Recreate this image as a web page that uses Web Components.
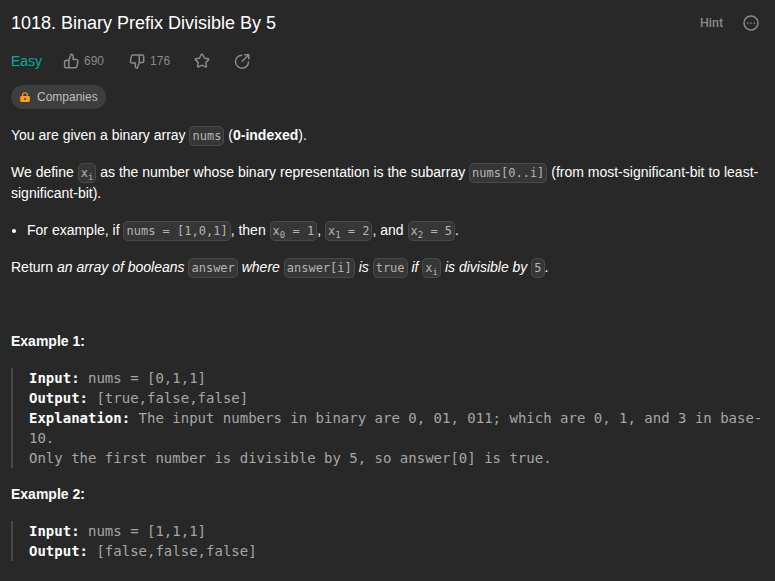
<!DOCTYPE html>
<html lang="en">
<head>
<meta charset="utf-8">
<title>1018. Binary Prefix Divisible By 5</title>
<style>
html,body{margin:0;background:#282828;height:581px;overflow:hidden}
body{font-family:"Liberation Sans",Arial,sans-serif;color:#fff}
</style>
</head>
<body>
<problem-page></problem-page>
<script>
const define = (name, html) => customElements.define(name, class extends HTMLElement {
  constructor() {
    super();
    const t = document.createElement('template');
    t.innerHTML = html;
    this.attachShadow({mode: 'open'}).append(t.content.cloneNode(true));
  }
});

const icons = {
  up: '<path d="M5.9 7.4h-3.3a1 1 0 0 0-1 1v5.3a1 1 0 0 0 1 1h3.3M5.9 6.9v7.8h6.5a1.5 1.5 0 0 0 1.5-1.2l1-5.2a1.5 1.5 0 0 0-1.5-1.8h-3.3V3a1.7 1.7 0 0 0-2.1-1.7L5.9 6.9z"/>',
  down: '<path d="M10.3 1.9h3.2a1.2 1.2 0 0 1 1.2 1.2v5.2a1.2 1.2 0 0 1-1.2 1.2h-3.2M10.3 1.900v7.700l-2 5.500a1.700 1.700 0 0 1-2-1.700V10.100H2.900a1.500 1.500 0 0 1-1.500-1.800l1-5.100a1.500 1.500 0 0 1 1.500-1.300z"/>',
  star: '<path d="M8 1.2q.6 0 .9.6l1.400 3q.2.4.6.5l3.200.5q1 .3.3 1.100L12 9.300q-.2.3-.2.6l.6 3.300q0 1-.9.7l-3-1.500q-.5-.2-1 0l-3 1.500q-.9.3-.9-.7l.6-3.300q0-.4-.2-.6L1.600 6.900Q.9 6.100 1.900 5.800l3.200-.5q.4-.1.6-.5l1.400-3q.3-.6.9-.6z"/>',
  share: '<path d="M7.800 2.200A6.500 6.500 0 1 0 14.500 8.900M8.300 8.200l5.700-5.700M10.800 1.700h4v4"/>',
  more: '<circle cx="8" cy="8" r="7"/><path d="M4.700 8h.01M8 8h.01M11.300 8h.01" stroke-width="1.700"/>'
};
customElements.define('line-icon', class extends HTMLElement {
  connectedCallback() {
    this.attachShadow({mode: 'open'}).innerHTML = `<style>:host{display:block;width:16px;height:16px;color:#8a8a8a}svg{display:block;overflow:visible}</style>
    <svg width="16" height="16" viewBox="0 0 16 16" fill="none" stroke="currentColor" stroke-width="1.500" stroke-linecap="round" stroke-linejoin="round">${icons[this.getAttribute('name')]}</svg>`;
  }
});

define('title-bar', `<style>
:host{display:flex;height:26px;align-items:center;justify-content:space-between;font-size:18px;line-height:26px}
.tools{display:flex;align-items:center;gap:20px}
.hint{font:500 12.500px/20px Roboto,sans-serif;color:#8a8a8a;width:23px;white-space:nowrap}
</style><div><slot></slot></div><div class="tools"><span class="hint">Hint</span><line-icon name="more"></line-icon></div>`);

define('stat-item', `<style>
:host{display:flex;align-items:center;gap:5px;font-size:12px;line-height:16px;color:#8a8a8a}
</style><slot name="icon"></slot><span><slot></slot></span>`);

define('stats-row', `<style>
:host{display:flex;align-items:center;height:24px;margin-top:13px}
.level{color:#00af9b;font-size:14px;width:52px}
.down{margin-left:25px}.star{margin-left:24px}.share{margin-left:24px}
</style><span class="level">Easy</span>
<stat-item class="up"><line-icon slot="icon" name="up"></line-icon>690</stat-item>
<stat-item class="down"><line-icon slot="icon" name="down"></line-icon>176</stat-item>
<line-icon class="star" name="star"></line-icon><line-icon class="share" name="share"></line-icon>`);

define('company-tag', `<style>
:host{display:flex;align-items:center;width:95px;height:24px;margin-top:12px;border-radius:12px;background:#3e3e3e;color:#bdbdbd;font-size:12px;box-sizing:border-box;padding-left:9px;gap:7px}
svg{display:block}
</style><svg width="10" height="12" viewBox="0 0 10 12"><path d="M2.700 5.500V4a2.300 2.300 0 0 1 4.600 0v1.500" fill="none" stroke="#ffa116" stroke-width="1.100"/><rect x=".2" y="5.100" width="9.600" height="5.900" rx="1.200" fill="#ffa116"/><rect x="4.200" y="7" width="1.600" height="2" rx=".6" fill="#4a3b24"/></svg><span><slot></slot></span>`);

define('code-chip', `<style>
:host{display:inline;font:normal 12px "DejaVu Sans Mono",monospace;color:#b4b4b4;background:#363636;border:1px solid #4a4a4a;border-radius:5px;padding:2px;white-space:pre}
::slotted(sub){font-size:9px;line-height:0;position:relative;vertical-align:baseline;bottom:-.3em}
</style><slot></slot>`);

define('text-block', `<style>
:host{display:block;font-size:14px;line-height:21px;margin-bottom:16px}
</style><slot></slot>`);

define('bullet-item', `<style>
:host{display:flex;align-items:center;font-size:14px;line-height:21px;margin-bottom:16px}
i{width:4px;height:4px;border-radius:50%;background:#fff;margin:1px 11px 0 1px}
</style><i></i><span><slot></slot></span>`);

define('example-block', `<style>
:host{display:block;border-left:2px solid #484848;padding-left:16px;margin-bottom:16px;font:14px/20px "DejaVu Sans Mono",monospace;color:#a6a6a6;white-space:pre-wrap}
::slotted(b){color:#fff}
</style><slot></slot>`);

define('problem-page', `<style>
:host{display:block;box-sizing:border-box;width:775px;height:581px;padding:10px 11px 0;background:#282828}
.body{margin-top:16px;margin-right:-2px}
title-bar{margin-right:5px}
</style>
<title-bar>1018. Binary Prefix Divisible By 5</title-bar>
<stats-row></stats-row>
<company-tag>Companies</company-tag>
<div class="body">
<text-block>You are given a binary array <code-chip>nums</code-chip> (<b>0-indexed</b>).</text-block>
<text-block>We define <code-chip>x<sub>i</sub></code-chip> as the number whose binary representation is the subarray <code-chip>nums[0..i]</code-chip> (from most-significant-bit to least-significant-bit).</text-block>
<bullet-item>For example, if <code-chip>nums = [1,0,1]</code-chip>, then <code-chip>x<sub>0</sub> = 1</code-chip>, <code-chip>x<sub>1</sub> = 2</code-chip>, and <code-chip>x<sub>2</sub> = 5</code-chip>.</bullet-item>
<text-block>Return <em>an array of booleans </em><code-chip>answer</code-chip><em> where </em><code-chip>answer[i]</code-chip><em> is </em><code-chip>true</code-chip><em> if </em><code-chip>x<sub>i</sub></code-chip><em> is divisible by </em><code-chip>5</code-chip>.</text-block>
<text-block>&nbsp;</text-block>
<text-block><b>Example 1:</b></text-block>
<example-block><b>Input:</b> nums = [0,1,1]
<b>Output:</b> [true,false,false]
<b>Explanation:</b> The input numbers in binary are 0, 01, 011; which are 0, 1, and 3 in base-10.
Only the first number is divisible by 5, so answer[0] is true.</example-block>
<text-block><b>Example 2:</b></text-block>
<example-block><b>Input:</b> nums = [1,1,1]
<b>Output:</b> [false,false,false]</example-block>
</div>`);
</script>
</body>
</html>
